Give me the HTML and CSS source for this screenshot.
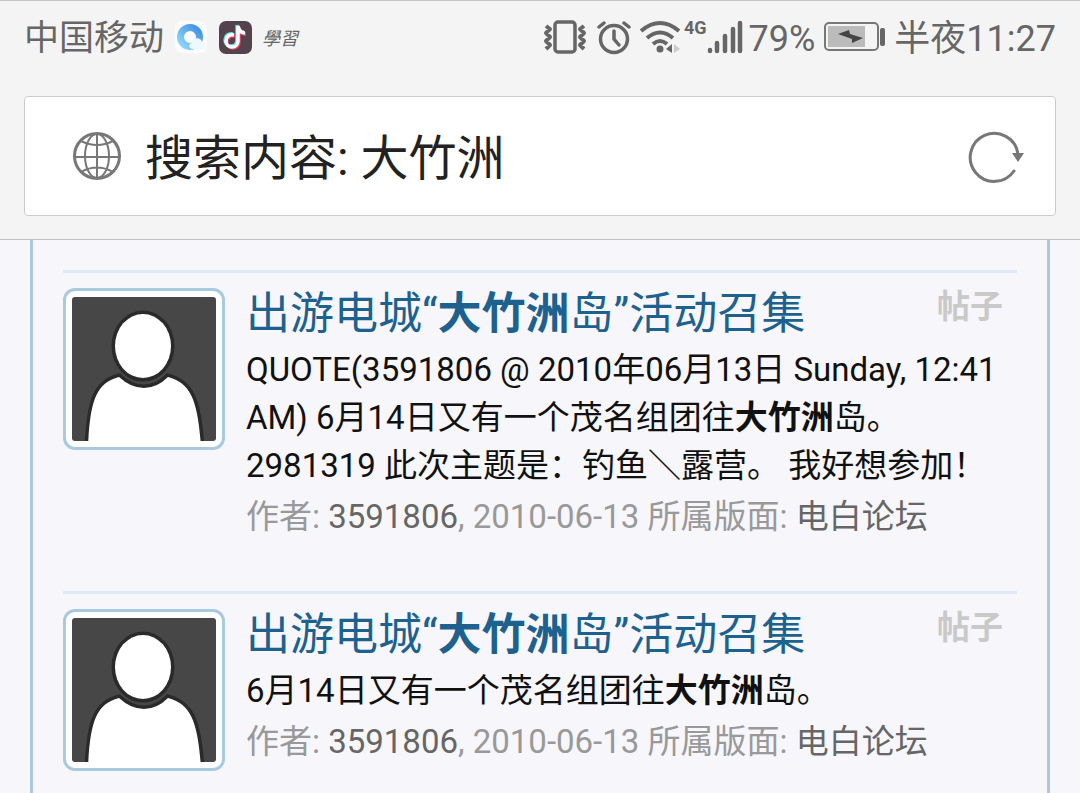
FILE: index.html
```html
<!doctype html>
<html lang="zh-CN">
  <head>
    <meta charset="utf-8">
    <meta name="viewport" content="width=device-width,initial-scale=1">
    <title>搜索内容: 大竹洲</title>
    <link rel="stylesheet" href="styles.css">
  </head>
  <body>
    <header class="browser">
      <div class="status">
        <div class="status-left">
          <span class="carrier">中国移动</span>
          <svg class="app" width="34" height="34" viewBox="0 0 34 34">
            <defs>
              <linearGradient id="qq" x1="0" y1="1" x2="1" y2="0">
                <stop offset="0" stop-color="#8fd8fc"/>
                <stop offset="1" stop-color="#3f8fe6"/>
              </linearGradient>
            </defs>
            <rect x="1" y="1" width="32" height="32" rx="7" fill="#fafbfc"/>
            <circle cx="16" cy="17" r="9.500" fill="none" stroke="url(#qq)" stroke-width="7"/>
            <path d="M19 29c-5 0-5-6-1-6 1-6 9-6 10-1 5 0 5 7 1 7z" fill="#eef8ff"/>
          </svg>
          <svg class="app" width="34" height="34" viewBox="0 0 34 34">
            <rect x="1" y="1" width="33" height="33" rx="7" fill="#54434c"/>
            <g fill="none" stroke-width="3.500">
              <path d="M16 15c-5-1-8 2-8 6s3 6 6 6 6-2 6-6V6c1 5 3 7 7 7" stroke="#5de0e0" transform="translate(-1 -1)"/>
              <path d="M16 15c-5-1-8 2-8 6s3 6 6 6 6-2 6-6V6c1 5 3 7 7 7" stroke="#e8486a" transform="translate(1 1)"/>
              <path d="M16 15c-5-1-8 2-8 6s3 6 6 6 6-2 6-6V6c1 5 3 7 7 7" stroke="#fff"/>
            </g>
          </svg>
          <span class="study">學習</span>
        </div>
        <div class="status-right">
          <svg width="44" height="36" viewBox="0 0 44 36" fill="none" stroke="#666" stroke-width="3.500">
            <rect x="12" y="3" width="20" height="30" rx="3"/>
            <path d="M3 7l4 3-4 4 4 4-4 4 4 4-4 4M41 7l-4 3 4 4-4 4 4 4-4 4 4 4" stroke-width="4" stroke-linejoin="round"/>
          </svg>
          <svg class="alarm" width="34" height="36" viewBox="0 0 34 36" fill="none" stroke="#666" stroke-width="3.500">
            <circle cx="17" cy="20" r="13.500"/>
            <path d="M17 12v8l5 6" stroke-linecap="round"/>
            <path d="M2 8l5-4M32 8l-5-4" stroke-linecap="round"/>
          </svg>
          <svg class="wifi" width="40" height="36" viewBox="0 0 40 36" fill="none" stroke="#666" stroke-width="4">
            <path d="M1 12Q20-4 39 12M7 19q13-11 26 0M13 25q7-6 14 0"/>
            <circle cx="20" cy="30" r="3.500" fill="#666" stroke="none"/>
            <path d="M32 25v9l-6-4z" fill="#666" stroke="none"/>
            <path d="M34 25v9l6-4z" fill="#ccc" stroke="none"/>
          </svg>
          <span class="network">4G</span>
          <svg class="signal" width="36" height="36" viewBox="0 0 36 36" stroke="#666" stroke-width="4.500" stroke-linecap="round">
            <path d="M3 31v1M10 24v8M18 17v15M26 10v22M33 4v28"/>
          </svg>
          <span class="percent">79%</span>
          <svg class="battery" width="62" height="30" viewBox="0 0 62 30">
            <rect x="1" y="1" width="53" height="27" rx="4" fill="none" stroke="#777" stroke-width="2"/>
            <rect x="4" y="4" width="37" height="21" fill="#bbb"/>
            <path d="M14 12l11-4 1 4 13 4-11 5v-4z" fill="#444"/>
            <rect x="56" y="6" width="5" height="18" rx="2" fill="#666"/>
          </svg>
          <time>半夜11:27</time>
        </div>
      </div>
      <form class="address">
        <svg width="50" height="50" viewBox="0 0 50 50" fill="none" stroke="#777" stroke-width="2">
          <circle cx="25" cy="25" r="22.500" stroke-width="3"/>
          <path d="M25 2v46M2 26h46M9 10q16 8 32 0M9 41q16-9 32 0"/>
          <ellipse cx="25" cy="25" rx="12" ry="22"/>
        </svg>
        <input type="text" aria-label="地址" value="搜索内容: 大竹洲">
        <button type="button" aria-label="刷新">
          <svg width="58" height="54" viewBox="0 0 58 54">
            <path d="M47 42A24 24 0 1 1 51 25" fill="none" stroke="#777" stroke-width="3" stroke-linecap="round"/>
            <path d="M45 24h12l-6 9z" fill="#777"/>
          </svg>
        </button>
      </form>
    </header>
    <main>
      <article class="result">
        <svg class="avatar" viewBox="0 0 144 144">
          <rect width="144" height="144" fill="#474747"/>
          <g fill="#fff" stroke="#2a2a2a" stroke-width="7" paint-order="stroke">
            <path d="M16 150C18 104 24 86 47 80Q59 91 72 91T96 80C119 86 126 104 129 150z"/>
            <ellipse cx="71" cy="49" rx="28" ry="32"/>
          </g>
        </svg>
        <div class="content">
          <div class="heading">
            <h3><a href="#">出游电城“<b>大竹洲</b>岛”活动召集</a></h3>
            <span class="type">帖子</span>
          </div>
          <p class="excerpt">QUOTE(3591806 @ 2010年06月13日 Sunday, 12:41 AM) 6月14日又有一个茂名组团往<b>大竹洲</b>岛。 2981319 此次主题是：钓鱼＼露营。 我好想参加！</p>
          <p class="meta">作者: <a href="#">3591806</a>, 2010-06-13 所属版面: <a href="#">电白论坛</a></p>
        </div>
      </article>
      <article class="result">
        <svg class="avatar" viewBox="0 0 144 144">
          <rect width="144" height="144" fill="#474747"/>
          <g fill="#fff" stroke="#2a2a2a" stroke-width="7" paint-order="stroke">
            <path d="M16 150C18 104 24 86 47 80Q59 91 72 91T96 80C119 86 126 104 129 150z"/>
            <ellipse cx="71" cy="49" rx="28" ry="32"/>
          </g>
        </svg>
        <div class="content">
          <div class="heading">
            <h3><a href="#">出游电城“<b>大竹洲</b>岛”活动召集</a></h3>
            <span class="type">帖子</span>
          </div>
          <p class="excerpt">6月14日又有一个茂名组团往<b>大竹洲</b>岛。</p>
          <p class="meta">作者: <a href="#">3591806</a>, 2010-06-13 所属版面: <a href="#">电白论坛</a></p>
        </div>
      </article>
    </main>
  </body>
</html>
```
FILE: styles.css
```css
* { box-sizing: border-box; }
html, body { margin: 0; padding: 0; }
body { min-height: 100vh; display: flex; flex-direction: column; background: #f6f6fb; color: #111; font-family: Roboto, "Noto Sans CJK SC", sans-serif; }
svg { display: block; flex: none; }
a { color: inherit; text-decoration: none; }

.browser { background: #f4f4f4; border-top: 1px solid #c4c4c4; border-bottom: 1px solid #c0c0c4; padding: 0 24px 23px; }
.status { display: flex; justify-content: space-between; height: 95px; padding-top: 17px; color: #666; font-size: 36px; line-height: 40px; white-space: nowrap; }
.status-left, .status-right { display: flex; align-items: center; height: 38px; }
.status-left { gap: 10px; }
.carrier, .percent, .status time { padding-top: 4px; }
.carrier { font-size: 35px; }
.study { font: italic 18px/20px "Noto Sans CJK TC", sans-serif; }
.alarm { margin-left: 10px; }
.wifi { margin-left: 9px; }
.network { align-self: flex-start; margin-left: 4px; font-size: 18px; font-weight: bold; line-height: 20px; }
.percent { margin: 0 9px 0 6px; }
.battery { margin-right: 8px; }

.address { display: flex; align-items: center; height: 120px; margin: 0; padding: 0 30px 0 47px; background: #fff; border: 1px solid #ccc; border-radius: 4px; }
.address input { flex: 1; min-width: 0; margin-left: 23px; padding: 6px 0 0; border: 0; outline: 0; background: none; color: #222; font: inherit; font-size: 48px; line-height: 72px; }
.address button { padding: 0; border: 0; background: none; }

main { flex: 1; margin: 0 30px; padding: 30px 30px 0; border: solid #abc9de; border-width: 0 3px; }
.result { display: flex; align-items: flex-start; gap: 21px; padding: 16px 14px 50px 0; border-top: 3px solid #dbeaf5; }
.avatar { width: 162px; height: 162px; margin-top: -1px; padding: 6px; border: 3px solid #a9c9df; border-radius: 12px; background: #fff; }
.content { flex: 1; min-width: 0; }
.heading { display: flex; justify-content: space-between; align-items: flex-start; margin-bottom: 7px; }
h3 { margin: 0; color: #1d618f; font-size: 44px; font-weight: normal; line-height: 50px; }
.type { color: #c9c9c9; font-size: 33px; font-weight: bold; line-height: 36px; }
p { margin: 0; font-size: 33px; line-height: 48px; }
.meta { margin-top: 3px; color: #999; }
.meta a { color: #666; }
```
